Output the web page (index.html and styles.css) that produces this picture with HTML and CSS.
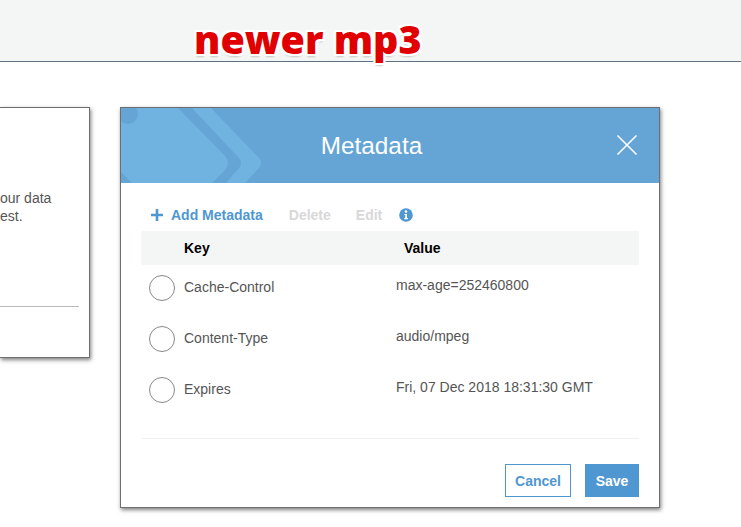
FILE: index.html
```html
<!DOCTYPE html>
<html lang="en">
<head>
    <meta charset="UTF-8">
    <meta name="viewport" content="width=device-width, initial-scale=1.0">
    <title>Metadata</title>
    <link rel="stylesheet" href="styles.css">
</head>
<body>
    <div class="topbar"></div>
    <div class="note">newer mp3</div>

    <div class="stage">
        <div class="back-panel">
            <p class="back-text">our data<br>est.</p>
            <div class="back-rule"></div>
        </div>

        <div class="modal">
            <div class="modal-head">
                <svg class="head-art" viewBox="0 0 146 75" width="146" height="75">
                    <path d="M0,0 L57,0 L104,48 Q110,55 104,62 L91,75 L0,75 Z" fill="#70b3e0"/>
                    <path d="M71,0 L90,0 L138,50 Q142,55 138,60 L124,75 L105,75 L118,60 Q122,55 118,50 Z" fill="#70b3e0"/>
                    <circle cx="7" cy="6" r="10" fill="#64a5d6"/>
                    <path d="M0,64 L11,75 L0,75 Z" fill="#64a5d6"/>
                </svg>
                <h1 class="modal-title">Metadata</h1>
                <svg class="close-icon" viewBox="0 0 22 22" width="22" height="22">
                    <path d="M1.5,1.5 L20.5,20.5 M20.5,1.5 L1.5,20.5" stroke="#fff" stroke-width="1.6" fill="none"/>
                </svg>
            </div>

            <div class="modal-body">
                <div class="toolbar">
                    <svg class="plus-icon" viewBox="0 0 12 12" width="12" height="12">
                        <path d="M6,0 L6,12 M0,6 L12,6" stroke="#4f97d0" stroke-width="2.6" fill="none"/>
                    </svg>
                    <span class="tool tool-add">Add Metadata</span>
                    <span class="tool tool-off tool-delete">Delete</span>
                    <span class="tool tool-off tool-edit">Edit</span>
                    <svg class="info-icon" viewBox="0 0 14 14" width="14" height="14">
                        <circle cx="7" cy="7" r="6.8" fill="#4f97d0"/>
                        <circle cx="7" cy="3.6" r="1.3" fill="#fff"/>
                        <path d="M5.4,5.9 L8,5.9 L8,10 L9,10 L9,11.2 L5.2,11.2 L5.2,10 L6.2,10 L6.2,7.1 L5.4,7.1 Z" fill="#fff"/>
                    </svg>
                </div>

                <div class="table-head">
                    <span class="col-key">Key</span>
                    <span class="col-value">Value</span>
                </div>

                <div class="row">
                    <span class="radio"></span>
                    <span class="row-key">Cache-Control</span>
                    <span class="row-value">max-age=252460800</span>
                </div>
                <div class="row">
                    <span class="radio"></span>
                    <span class="row-key">Content-Type</span>
                    <span class="row-value">audio/mpeg</span>
                </div>
                <div class="row">
                    <span class="radio"></span>
                    <span class="row-key">Expires</span>
                    <span class="row-value">Fri, 07 Dec 2018 18:31:30 GMT</span>
                </div>

                <div class="modal-foot">
                    <button class="btn btn-cancel">Cancel</button>
                    <button class="btn btn-save">Save</button>
                </div>
            </div>
        </div>
    </div>
</body>
</html>
```

FILE: styles.css
```css
body {
    margin: 0;
    height: 527px;
    overflow: hidden;
    background-color: #fff;
    font-family: "Liberation Sans", Arial, sans-serif;
    color: #555;
}

.topbar {
    height: 61px;
    background-color: #f4f6f6;
    border-bottom: 1px solid #5d7180;
}

/* Red note pasted over the screenshot */
.note {
    position: absolute;
    left: 194px;
    top: 13px;
    font-family: "Open Sans", sans-serif;
    font-size: 39.4px;
    font-weight: 800;
    line-height: 52px;
    color: #e00000;
    text-shadow: 2px 0 0 #fff, -2px 0 0 #fff, 0 2px 0 #fff, 0 -2px 0 #fff, 2px 2px 0 #fff, -2px 2px 0 #fff, 2px -2px 0 #fff, -2px -2px 0 #fff, 0 3px 2px rgba(0, 0, 0, 0.2);
}

.stage {
    display: flex;
    align-items: flex-start;
    gap: 30px;
    padding-top: 45px;
}

.back-panel {
    box-sizing: border-box;
    width: 90px;
    height: 251px;
    padding-top: 81px;
    background-color: #fff;
    border: 1px solid #6e6e6e;
    border-left: none;
    box-shadow: 1px 2px 4px rgba(0, 0, 0, 0.5);
}

.back-text {
    margin: 0;
    font-size: 14px;
    line-height: 18px;
    color: #555;
}

.back-rule {
    width: 79px;
    margin-top: 81px;
    border-top: 1px solid #bbb;
}

.modal {
    box-sizing: border-box;
    width: 540px;
    height: 401px;
    background-color: #fff;
    border: 1px solid #6e6e6e;
    box-shadow: 1px 2px 4px rgba(0, 0, 0, 0.5);
}

.modal-head {
    position: relative;
    display: flex;
    justify-content: center;
    align-items: center;
    height: 75px;
    padding-right: 37px;
    background-color: #64a5d6;
}

.head-art {
    position: absolute;
    left: 0;
    top: 0;
}

.modal-title {
    position: relative;
    margin: 0;
    font-size: 24.3px;
    font-weight: 400;
    color: #fff;
}

.close-icon {
    position: absolute;
    right: 21px;
    top: 26px;
}

.modal-body {
    padding: 0 20px;
}

.toolbar {
    display: flex;
    align-items: center;
    height: 48px;
    font-size: 14px;
    font-weight: 700;
    padding-left: 10px;
    padding-top: 15px;
    box-sizing: border-box;
}

.tool-add {
    margin-left: 8px;
    color: #4f97d0;
}

.tool-off {
    color: #d8d8d8;
}

.tool-delete {
    margin-left: 26px;
}

.tool-edit {
    margin-left: 25px;
}

.info-icon {
    margin-left: 17px;
}

.table-head {
    display: flex;
    align-items: center;
    height: 34px;
    background-color: #f4f6f6;
    font-size: 14px;
    font-weight: 700;
    color: #000;
}

.col-key {
    width: 263px;
    padding-left: 43px;
    box-sizing: border-box;
}

.row {
    display: flex;
    align-items: center;
    height: 45px;
    margin-bottom: 6px;
    font-size: 14px;
}

.radio {
    box-sizing: border-box;
    flex: none;
    width: 26px;
    height: 26px;
    margin-left: 8px;
    border: 1px solid #888;
    border-radius: 50%;
}

.row-key {
    width: 212px;
    margin-left: 9px;
    margin-top: -2px;
}

.row-value {
    margin-top: -6px;
    font-size: 14px;
}

.modal-foot {
    display: flex;
    justify-content: flex-end;
    gap: 14px;
    margin-top: 26px;
    padding-top: 25px;
    border-top: 1px solid #f1f1f1;
}

.btn {
    box-sizing: border-box;
    height: 33px;
    padding: 0;
    font-family: inherit;
    font-size: 14px;
    font-weight: 700;
    border: 1px solid #4f97d0;
}

.btn-cancel {
    width: 66px;
    background-color: #fff;
    color: #4f97d0;
}

.btn-save {
    width: 54px;
    background-color: #4f97d0;
    color: #fff;
}
```
